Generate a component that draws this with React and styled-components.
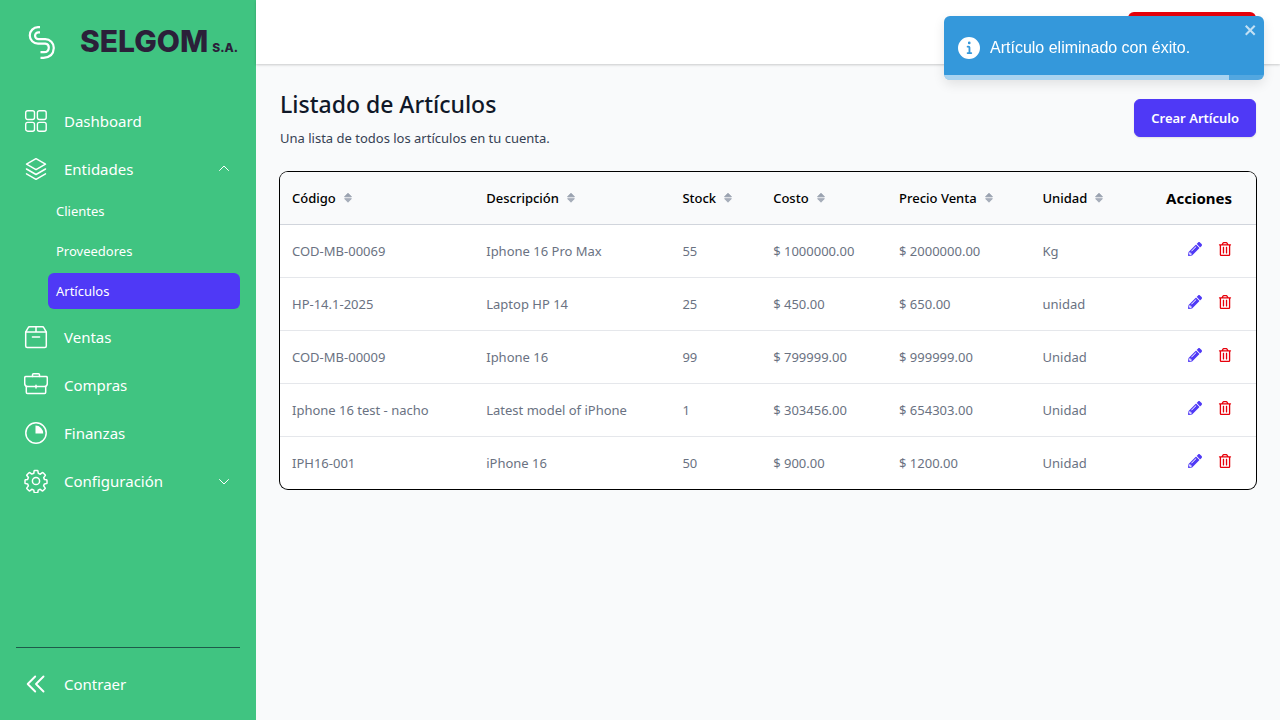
import React from "react";
import styled, { createGlobalStyle, css } from "styled-components";
import { FaPencilAlt, FaRegTrashAlt } from "react-icons/fa";

const GlobalStyle = createGlobalStyle`
  *, *::before, *::after { box-sizing: border-box; }
  body {
    margin: 0;
    background: #f9fafb;
    font-family: "Noto Sans", "Open Sans", sans-serif;
    color: #101828;
  }
  button { font: inherit; border: 0; padding: 0; background: none; cursor: pointer; }
  a { color: inherit; text-decoration: none; }
  h1, p, ul { margin: 0; padding: 0; }
  ul { list-style: none; }
  svg { flex: none; }
`;

const Layout = styled.div`
  display: flex;
  min-height: 100vh;
`;

const Sidebar = styled.aside`
  display: flex;
  flex-direction: column;
  flex: 0 0 256px;
  min-width: 0;
  background: #40c481;
  color: #fff;
`;

const Brand = styled.a`
  display: flex;
  align-items: center;
  gap: 24px;
  height: 85px;
  padding: 0 16px 0 28px;
`;

const BrandName = styled.span`
  display: flex;
  align-items: baseline;
  gap: 4px;
  padding-top: 4px;
  font-family: Inter, sans-serif;
  font-size: 30px;
  font-weight: 800;
  line-height: 40px;
  color: #2b2039;
  white-space: nowrap;
`;

const BrandSuffix = styled.small`
  font-size: 12px;
`;

const Nav = styled.nav`
  flex: 1;
  padding: 16px;
`;

const NavList = styled.ul`
  display: flex;
  flex-direction: column;
  gap: 8px;
`;

const itemStyle = css`
  display: flex;
  align-items: center;
  gap: 16px;
  width: 100%;
  height: 40px;
  padding: 0 8px;
  border-radius: 6px;
  font-size: 15px;
  line-height: 24px;
  color: #fff;
  text-align: left;
`;

const NavLink = styled.a`${itemStyle}`;
const NavButton = styled.button`${itemStyle}`;

const NavLabel = styled.span`
  flex: 1;
`;

const SubList = styled.ul`
  display: flex;
  flex-direction: column;
  gap: 4px;
  padding: 4px 0 0 32px;
`;

const SubLink = styled.a`
  display: flex;
  align-items: center;
  height: 36px;
  padding: 0 8px;
  border-radius: 6px;
  font-size: 13px;
  line-height: 20px;
  background: ${(p) => (p.$active ? "#4f39f6" : "transparent")};
`;

const SidebarFooter = styled.div`
  margin: 0 16px;
  padding: 16px 0;
  border-top: 1px solid #1e5a4a;
`;

const Main = styled.div`
  flex: 1;
  min-width: 0;
`;

const TopBar = styled.header`
  display: flex;
  justify-content: flex-end;
  align-items: center;
  height: 64px;
  padding: 0 24px;
  background: #fff;
  box-shadow: 0 1px 3px rgba(0, 0, 0, 0.1), 0 1px 2px rgba(0, 0, 0, 0.1);
`;

const LogoutButton = styled.button`
  width: 128px;
  height: 40px;
  border-radius: 6px;
  background: #e7000b;
`;

const Content = styled.main`
  padding: 24px;
`;

const PageHead = styled.div`
  display: flex;
  justify-content: space-between;
  align-items: center;
  margin-bottom: 24px;
`;

const Title = styled.h1`
  font-size: 23px;
  font-weight: 500;
  line-height: 32px;
`;

const Subtitle = styled.p`
  margin-top: 8px;
  font-size: 13px;
  line-height: 20px;
  color: #364153;
`;

const CreateButton = styled.button`
  height: 38px;
  padding: 0 16px;
  border: 1px solid #4f39f6;
  border-radius: 6px;
  background: #4f39f6;
  box-shadow: 0 1px 2px rgba(0, 0, 0, 0.1);
  color: #fff;
  font-size: 13px;
  font-weight: 600;
  line-height: 20px;
`;

const TableCard = styled.div`
  overflow: hidden;
  border-radius: 8px;
  background: #fff;
  box-shadow: 0 0 0 1px #000;
`;

const Table = styled.table`
  width: 100%;
  table-layout: fixed;
  border-collapse: separate;
  border-spacing: 0;
`;

const Col = styled.col`
  width: ${(p) => p.$width};
`;

const HeadCell = styled.th`
  height: 53px;
  padding: 0 12px;
  border-bottom: 1px solid #d1d5dc;
  background: #f9fafb;
  font-size: 13px;
  font-weight: 500;
  line-height: 20px;
  text-align: left;
`;

const ActionsHead = styled(HeadCell)`
  padding-right: 24px;
  font-size: 15px;
  font-weight: 700;
  color: #000;
  text-align: right;
`;

const SortButton = styled.button`
  display: flex;
  align-items: center;
  gap: 8px;
  white-space: nowrap;

  svg { color: #99a1af; }
`;

const Row = styled.tr`
  &:not(:last-child) td { border-bottom: 1px solid #e5e7eb; }
  &:last-child td { height: 52px; }
`;

const Cell = styled.td`
  height: 53px;
  padding: 0 12px;
  font-size: 13px;
  line-height: 20px;
  color: #6a7282;
  white-space: nowrap;
`;

const Actions = styled.div`
  display: flex;
  justify-content: flex-end;
  gap: 16px;
  padding: 0 12px 4px 0;
`;

const IconButton = styled.button`
  display: flex;
  color: ${(p) => p.$color};
`;

const Toast = styled.div`
  position: fixed;
  top: 16px;
  right: 16px;
  display: flex;
  align-items: center;
  gap: 10px;
  width: 320px;
  height: 64px;
  padding: 14px;
  overflow: hidden;
  border-radius: 6px;
  background: #3498db;
  box-shadow: 0 4px 12px rgba(0, 0, 0, 0.1);
  color: #fff;
  font-family: "Liberation Sans", Arial, sans-serif;
  font-size: 16px;
  line-height: 20px;
`;

const CloseButton = styled.button`
  position: absolute;
  top: 6px;
  right: 6px;
  display: flex;
  color: #fff;
  opacity: 0.7;
`;

const ToastTrack = styled.div`
  position: absolute;
  left: 0;
  right: 0;
  bottom: 0;
  height: 5px;
  background: rgba(255, 255, 255, 0.15);
`;

const ToastBar = styled.div`
  height: 100%;
  background: rgba(255, 255, 255, 0.5);
`;

const LineIcon = ({ children, width = 1.4 }) => (
  <svg width="24" height="24" viewBox="0 0 24 24" fill="none" stroke="currentColor"
    strokeWidth={width} strokeLinecap="round" strokeLinejoin="round" aria-hidden="true">
    {children}
  </svg>
);

const DashboardIcon = () => (
  <LineIcon>
    <rect x="1.7" y="1.7" width="8.8" height="8.8" rx="2" />
    <rect x="13.4" y="1.7" width="8.8" height="8.8" rx="2" />
    <rect x="1.7" y="13.4" width="8.8" height="8.8" rx="2" />
    <rect x="13.4" y="13.4" width="8.8" height="8.8" rx="2" />
  </LineIcon>
);

const LayersIcon = () => (
  <LineIcon width={1.5}>
    <path d="M12 1.7 21.5 7.2 12 12.7 2.5 7.2Z" />
    <path d="M2.5 12 12 17.5 21.5 12" />
    <path d="M2.5 16.8 12 22.3 21.5 16.8" />
  </LineIcon>
);

const BoxIcon = () => (
  <LineIcon width={1.5}>
    <path d="M1.7 7.2V21q0 1.5 1.5 1.5h17.6q1.5 0 1.5-1.5V7.2L19.8 2.6q-.4-.9-1.4-.9H5.6q-1 0-1.4.9Z" />
    <path d="M1.7 6.9h20.6M12 1.7v5.2M8.4 12h7.2" />
  </LineIcon>
);

const BriefcaseIcon = () => (
  <LineIcon width={1.5}>
    <path d="M1.9 3.6h20.2q1.2 0 1.2 1.2v5.6q0 3.2-3 3.2H3.7q-3 0-3-3.2V4.8q0-1.2 1.2-1.2Z" />
    <path d="M8.5 3.6V1.8q0-1 1-1h5q1 0 1 1v1.8M2.3 13.6V19.3q0 1.1 1.1 1.1h17.2q1.1 0 1.1-1.1V13.6M12 12.2v2.8" />
  </LineIcon>
);

const PieIcon = () => (
  <LineIcon width={1.5}>
    <circle cx="12" cy="12" r="10.2" />
    <path d="M11.5 4.5V12.5H19.2A7.8 7.8 0 0 0 11.5 4.5Z" fill="currentColor" stroke="none" />
  </LineIcon>
);

const GearIcon = () => (
  <LineIcon width={1.5}>
    <circle cx="12" cy="12" r="3.6" />
    <path d="M10.7 1.5h2.6q.5 0 .6.5l.4 2.400 2 .8 2-1.500q.4-.3.8.1l2 2q.4.4.1.8l-1.500 2 .8 2 2 .2q.5.1.5.6v2.600q0 .5-.5.6l-2.100.3-.8 2 1.500 2q.3.4-.1.8l-2 2q-.4.4-.8.1l-2-1.500-2 .8-.3 2.100q-.1.5-.6.5h-2.600q-.5 0-.6-.5l-.3-2.100-2-.8-2 1.500q-.4.3-.8-.1l-2-2q-.4-.4-.1-.8l1.500-2-.8-2-2.100-.3q-.5-.1-.5-.6v-2.600q0-.5.5-.6l2.100-.3.8-2-1.500-2q-.3-.4.1-.8l2-2q.4-.4.8-.1l2 1.500 2-.8.3-2.300q.1-.5.6-.5Z" />
  </LineIcon>
);

const CollapseIcon = () => (
  <LineIcon width={1.9}>
    <path d="M11.2 4.5 3.7 12l7.5 7.5M19.5 4.5 12 12l7.5 7.5" />
  </LineIcon>
);

const Chevron = ({ up }) => (
  <svg width="16" height="16" viewBox="0 0 16 16" fill="none" stroke="currentColor"
    strokeLinecap="round" strokeLinejoin="round" aria-hidden="true">
    <path d={up ? "M3.5 9.5 8 5l4.500 4.500" : "M3.5 6.5 8 11l4.500-4.500"} />
  </svg>
);

const SortIcon = () => (
  <svg width="8" height="12" viewBox="0 0 8 12" fill="currentColor" stroke="currentColor"
    strokeLinejoin="round" aria-hidden="true">
    <path d="M4 1.3 7.4 4.8H.6Z" />
    <path d="M.6 6.7H7.400L4 10.200Z" opacity=".85" />
  </svg>
);

const BrandMark = () => (
  <svg width="28" height="34" viewBox="0 0 28 34" fill="none" stroke="#fff" strokeWidth="2.200" aria-hidden="true">
    <path d="M12 1.200H10A8.200 8.200 0 0 0 10 17.600H17.300A3.900 3.900 0 0 1 20.800 21.500Q20.800 26.200 16 26.200H12.500" />
    <path d="M12 6.300H10.500A3.400 3.400 0 0 0 10.500 13.200H17.300A8.700 8.700 0 0 1 25.800 22Q25.300 31.500 15.500 31.800H12.500" />
  </svg>
);

const InfoIcon = () => (
  <svg width="22" height="22" viewBox="0 0 24 24" fill="currentColor" aria-hidden="true">
    <path d="M12 0a12 12 0 1012 12A12.013 12.013 0 0012 0zm.25 5a1.500 1.500 0 11-1.500 1.500 1.500 1.500 0 011.500-1.500zm2.250 13.500h-4a1 1 0 010-2h.75a.25.25 0 00.25-.25v-4.500a.25.25 0 00-.25-.25h-.75a1 1 0 010-2h1a2 2 0 012 2v4.750a.25.25 0 00.25.25h.75a1 1 0 110 2z" />
  </svg>
);

const CloseIcon = () => (
  <svg width="14" height="16" viewBox="0 0 14 16" fill="currentColor" aria-hidden="true">
    <path d="M7.710 8.230l3.750 3.750-1.480 1.480-3.750-3.750-3.750 3.750L1 11.980l3.750-3.750L1 4.480 2.480 3l3.750 3.750L9.980 3l1.480 1.480-3.750 3.750z" />
  </svg>
);

const columns = [
  { label: "Código", width: "19.9%" },
  { label: "Descripción", width: "20.1%" },
  { label: "Stock", width: "9.3%" },
  { label: "Costo", width: "12.9%" },
  { label: "Precio Venta", width: "14.7%" },
  { label: "Unidad", width: "10%" },
];

const articles = [
  ["COD-MB-00069", "Iphone 16 Pro Max", "55", "$ 1000000.00", "$ 2000000.00", "Kg"],
  ["HP-14.1-2025", "Laptop HP 14", "25", "$ 450.00", "$ 650.00", "unidad"],
  ["COD-MB-00009", "Iphone 16", "99", "$ 799999.00", "$ 999999.00", "Unidad"],
  ["Iphone 16 test - nacho", "Latest model of iPhone", "1", "$ 303456.00", "$ 654303.00", "Unidad"],
  ["IPH16-001", "iPhone 16", "50", "$ 900.00", "$ 1200.00", "Unidad"],
];

const entities = ["Clientes", "Proveedores", "Artículos"];

export default function App() {
  const progress = 89;

  return (
    <>
      <GlobalStyle />
      <Layout>
        <Sidebar>
          <Brand href="#">
            <BrandMark />
            <BrandName>SELGOM<BrandSuffix>S.A.</BrandSuffix></BrandName>
          </Brand>
          <Nav>
            <NavList>
              <li><NavLink href="#"><DashboardIcon /><NavLabel>Dashboard</NavLabel></NavLink></li>
              <li>
                <NavButton type="button" aria-expanded="true">
                  <LayersIcon /><NavLabel>Entidades</NavLabel><Chevron up />
                </NavButton>
                <SubList>
                  {entities.map((name) => (
                    <li key={name}><SubLink href="#" $active={name === "Artículos"}>{name}</SubLink></li>
                  ))}
                </SubList>
              </li>
              <li><NavLink href="#"><BoxIcon /><NavLabel>Ventas</NavLabel></NavLink></li>
              <li><NavLink href="#"><BriefcaseIcon /><NavLabel>Compras</NavLabel></NavLink></li>
              <li><NavLink href="#"><PieIcon /><NavLabel>Finanzas</NavLabel></NavLink></li>
              <li>
                <NavButton type="button" aria-expanded="false">
                  <GearIcon /><NavLabel>Configuración</NavLabel><Chevron />
                </NavButton>
              </li>
            </NavList>
          </Nav>
          <SidebarFooter>
            <NavButton type="button"><CollapseIcon /><NavLabel>Contraer</NavLabel></NavButton>
          </SidebarFooter>
        </Sidebar>
        <Main>
          <TopBar><LogoutButton type="button" aria-label="Cerrar sesión" /></TopBar>
          <Content>
            <PageHead>
              <div>
                <Title>Listado de Artículos</Title>
                <Subtitle>Una lista de todos los artículos en tu cuenta.</Subtitle>
              </div>
              <CreateButton type="button">Crear Artículo</CreateButton>
            </PageHead>
            <TableCard>
              <Table>
                <colgroup>
                  {columns.map((c) => <Col key={c.label} $width={c.width} />)}
                  <Col $width="13.1%" />
                </colgroup>
                <thead>
                  <tr>
                    {columns.map((c) => (
                      <HeadCell key={c.label} scope="col">
                        <SortButton type="button">{c.label}<SortIcon /></SortButton>
                      </HeadCell>
                    ))}
                    <ActionsHead scope="col">Acciones</ActionsHead>
                  </tr>
                </thead>
                <tbody>
                  {articles.map((row) => (
                    <Row key={row[0]}>
                      {row.map((value, i) => <Cell key={i}>{value}</Cell>)}
                      <Cell>
                        <Actions>
                          <IconButton type="button" aria-label="Editar" $color="#4f39f6"><FaPencilAlt size={14} /></IconButton>
                          <IconButton type="button" aria-label="Eliminar" $color="#e7000b"><FaRegTrashAlt size={14} /></IconButton>
                        </Actions>
                      </Cell>
                    </Row>
                  ))}
                </tbody>
              </Table>
            </TableCard>
          </Content>
        </Main>
      </Layout>
      <Toast role="alert">
        <InfoIcon />
        Artículo eliminado con éxito.
        <CloseButton type="button" aria-label="Cerrar"><CloseIcon /></CloseButton>
        <ToastTrack><ToastBar style={{ width: `${progress}%` }} /></ToastTrack>
      </Toast>
    </>
  );
}
